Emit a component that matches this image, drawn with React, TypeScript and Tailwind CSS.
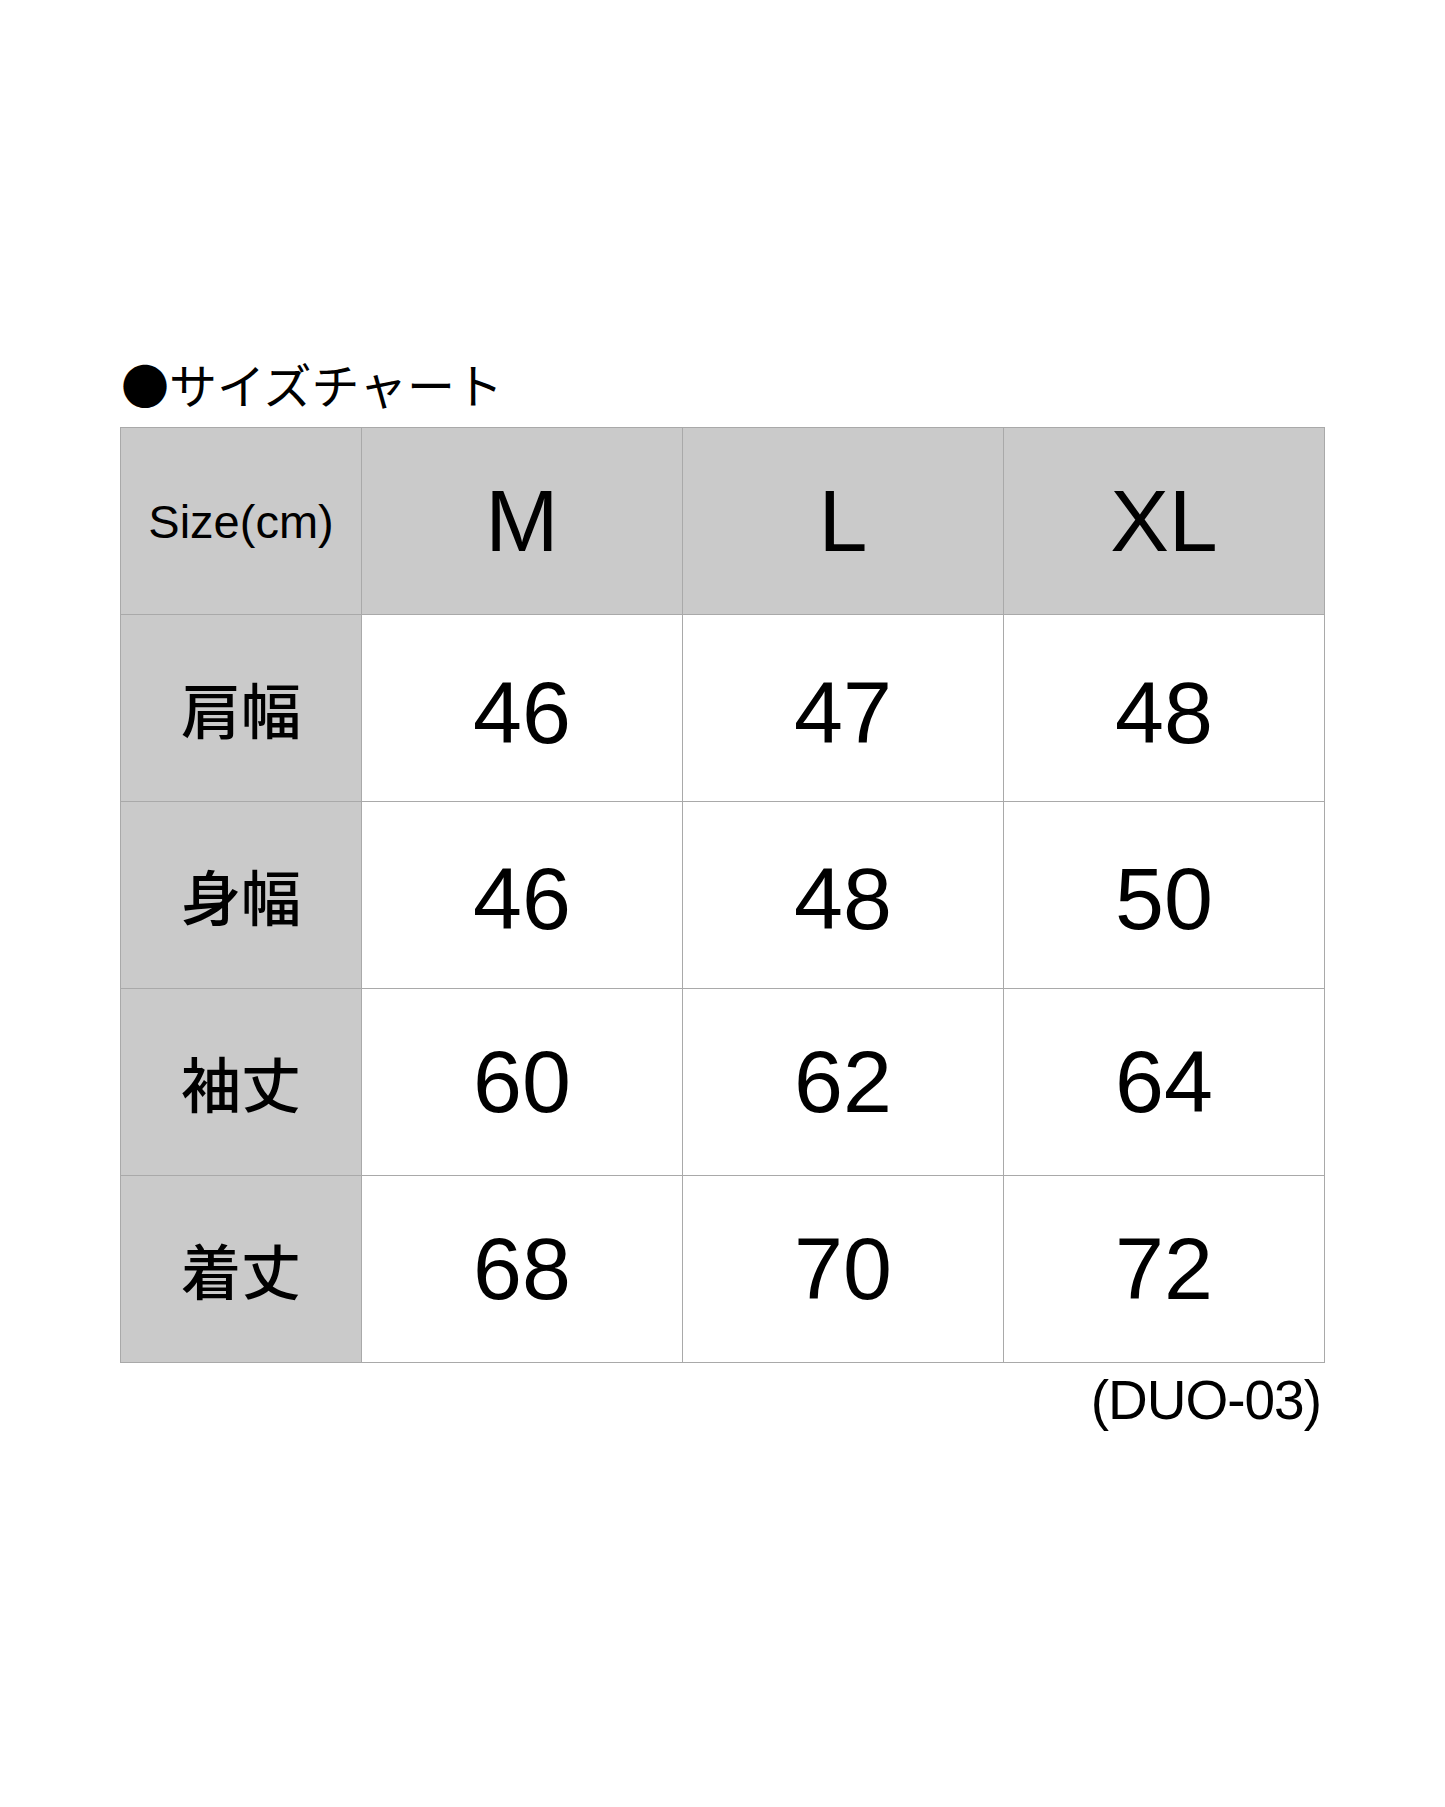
import React from "react"

const sizes = ["M", "L", "XL"]

// shift: small per-row nudges so the figures sit where the source chart has them
const rows = [
  { label: "肩幅", values: ["46", "47", "48"], shift: "pt-[10px]" },
  { label: "身幅", values: ["46", "48", "50"], shift: "pt-[8px]" },
  { label: "袖丈", values: ["60", "62", "64"], shift: "pt-0" },
  { label: "着丈", values: ["68", "70", "72"], shift: "pt-0" },
]

const latin = "font-['Liberation_Sans','Noto_Sans_CJK_JP',sans-serif]"
const cjk = "font-['Noto_Sans_CJK_JP',sans-serif]"

export default function App() {
  return (
    <div className="min-h-[1807px] w-[1445px] bg-white text-black">
      <div className="flex flex-col pt-[359px] pl-[120px] w-[1325px]">
        {/* Title */}
        <h1 className={`${cjk} text-[48px] leading-none mb-[20px] ml-[1px]`}>●サイズチャート</h1>

        {/* Table */}
        <div className="grid grid-cols-[240px_320px_320px_320px] grid-rows-[repeat(5,186px)] gap-px p-px bg-[#a9a9a9]">
          <div className="bg-[#cacaca] flex items-center justify-center">
            <span className={`${latin} text-[47px] leading-none`}>Size(cm)</span>
          </div>
          {sizes.map((s) => (
            <div key={s} className="bg-[#cacaca] flex items-center justify-center">
              <span className={`${latin} text-[88px] leading-none`}>{s}</span>
            </div>
          ))}

          {rows.map((row) => (
            <React.Fragment key={row.label}>
              <div className="bg-[#cacaca] flex items-center justify-center">
                <span className={`${cjk} text-[60px] leading-none font-medium`}>{row.label}</span>
              </div>
              {row.values.map((v, i) => (
                <div key={i} className={`bg-white flex items-center justify-center ${row.shift}`}>
                  <span className={`${latin} text-[88px] leading-none`}>{v}</span>
                </div>
              ))}
            </React.Fragment>
          ))}
        </div>

        {/* Model code */}
        <div className="flex justify-end pr-[4px] mt-[10px]">
          <span className={`${latin} text-[55px] leading-none tracking-[-1px]`}>(DUO-03)</span>
        </div>
      </div>
    </div>
  )
}
